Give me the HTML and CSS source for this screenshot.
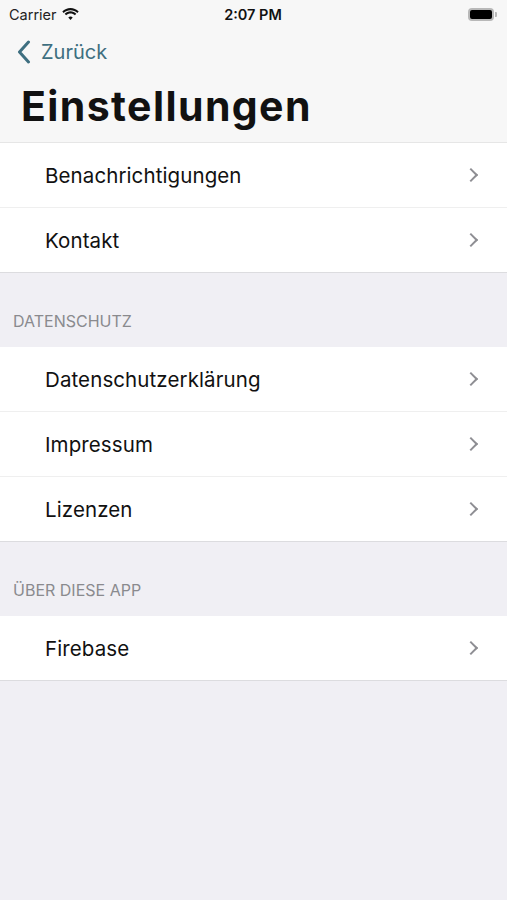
FILE: index.html
```html
<!DOCTYPE html>
<html lang="de">

<head>
  <meta charset="UTF-8">
  <meta name="viewport" content="width=device-width, initial-scale=1.0">
  <title>Einstellungen</title>
  <link rel="stylesheet" href="styles.css">
</head>

<body>
  <header class="bar">
    <div class="status">
      <span class="carrier">Carrier
        <svg class="wifi" width="17" height="12" viewBox="0 0 17 12">
          <path d="M8.5 2.2c2.6 0 5 1 6.8 2.7l1.4-1.5C14.5 1.3 11.6 0 8.5 0S2.5 1.3.3 3.4l1.4 1.5C3.5 3.2 5.9 2.2 8.5 2.2z" />
          <path d="M8.5 5.5c1.7 0 3.2.6 4.4 1.7l1.4-1.5C12.8 4.2 10.7 3.3 8.5 3.3S4.2 4.2 2.7 5.7l1.4 1.5C5.3 6.1 6.8 5.5 8.5 5.5z" />
          <path d="M8.5 8.6c.9 0 1.6.3 2.2.9L8.5 11.9 6.3 9.5c.6-.6 1.3-.9 2.2-.9z" />
        </svg>
      </span>
      <span class="time">2:07 PM</span>
      <span class="battery"><span class="level"></span></span>
    </div>
    <a class="back" href="#">
      <svg width="14" height="24" viewBox="0 0 14 24">
        <path d="M11.5 2 2.5 12l9 10" fill="none" stroke="currentColor" stroke-width="3" stroke-linecap="round" stroke-linejoin="round" />
      </svg>
      Zurück
    </a>
    <h1>Einstellungen</h1>
  </header>

  <main>
    <ul class="group">
      <li>Benachrichtigungen</li>
      <li>Kontakt</li>
    </ul>

    <h2>Datenschutz</h2>
    <ul class="group">
      <li>Datenschutzerklärung</li>
      <li>Impressum</li>
      <li>Lizenzen</li>
    </ul>

    <h2>Über diese App</h2>
    <ul class="group">
      <li>Firebase</li>
    </ul>
  </main>
</body>

</html>
```

FILE: styles.css
```css
:root {
  font-family: Inter, "Noto Sans", sans-serif;
}

body {
  margin: 0;
  background: #f0eff4;
  color: #111;
}

.bar {
  background: #f7f7f7;
  border-bottom: 1px solid #e6e6e6;
  padding-bottom: 12px;
}

.status {
  display: flex;
  align-items: center;
  justify-content: space-between;
  height: 28px;
  padding: 0 10px 0 9px;
  font-size: 14.5px;
}

.carrier {
  display: flex;
  align-items: center;
  gap: 5px;
  color: #222;
  width: 100px;
}

.wifi {
  fill: #111;
}

.time {
  font-weight: 600;
}

.battery {
  display: flex;
  justify-content: flex-end;
  width: 100px;
}

.battery .level {
  width: 22px;
  height: 9px;
  background: #000;
  border: 2px solid #b8b8b8;
  border-radius: 4px;
}

.battery::after {
  content: "";
  width: 2px;
  height: 5px;
  margin: auto 0 auto 1px;
  background: #b8b8b8;
  border-radius: 0 1px 1px 0;
}

.back {
  display: flex;
  align-items: center;
  gap: 10px;
  height: 48px;
  padding-left: 17px;
  color: #3e6f80;
  text-decoration: none;
  font-size: 20px;
}

h1 {
  margin: 6px 0 0 21px;
  font-size: 41px;
  font-weight: 700;
  letter-spacing: 1.4px;
  line-height: 48px;
}

.group {
  list-style: none;
  margin: 0;
  padding: 0;
  background: #fff;
  border-bottom: 1px solid #dcdcdf;
}

.group li {
  display: flex;
  align-items: center;
  height: 64px;
  padding-left: 45px;
  border-top: 1px solid #efefef;
  font-size: 20.5px;
  letter-spacing: .1px;
  position: relative;
}

.group li:first-child {
  border-top: none;
}

.group li::after {
  content: "";
  position: absolute;
  right: 31px;
  top: 50%;
  width: 8px;
  height: 8px;
  border-top: 2px solid #8e8e93;
  border-right: 2px solid #8e8e93;
  transform: translateY(-50%) rotate(45deg);
}

h2 {
  margin: 0;
  padding: 38px 13px 16px;
  font-size: 16px;
  font-weight: 400;
  text-transform: uppercase;
  color: #8a8a8e;
  line-height: 20px;
}
```
